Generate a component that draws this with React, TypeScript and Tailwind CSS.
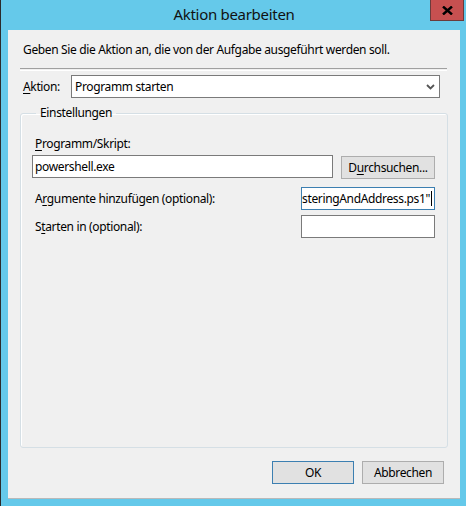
const font = { fontFamily: '"Noto Sans", "Liberation Sans", sans-serif' };

const Key = ({ children }: { children: string }) => (
  <span className="underline underline-offset-2">{children}</span>
);

const Button = ({
  children,
  primary,
  className = '',
}: {
  children: React.ReactNode;
  primary?: boolean;
  className?: string;
}) => (
  <div
    className={`flex h-[23px] items-center justify-center border bg-[#e1e1e1] text-[12px] text-black ${
      primary ? 'border-[#3c7fb1]' : 'border-[#adadad]'
    } ${className}`}
  >
    {children}
  </div>
);

export default function App() {
  return (
    <div
      className="flex h-[506px] w-[466px] flex-col border-l border-[#2b2b2b] bg-[#65c9ea] pb-[7px] pl-[7px] pr-[6px] tracking-[-0.35px]"
      style={font}
    >
      {/* title bar */}
      <div className="relative flex h-[30px] shrink-0 items-center justify-center">
        <span className="pb-[1px] text-[15px] tracking-[-0.3px] text-[#111]">Aktion bearbeiten</span>
        <div className="absolute right-[-4px] top-0 flex h-[21px] w-[34px] items-center justify-center border border-t-0 border-[#6b3b3b] bg-[#c75050]">
          <svg width="11" height="9" viewBox="0 0 11 9">
            <path d="M1 0.5 L10 8.5 M10 0.5 L1 8.5" stroke="#000" strokeWidth="2.4" />
          </svg>
        </div>
      </div>

      {/* content */}
      <div className="flex flex-1 flex-col border-b border-[#b9b9b9] bg-[#f0f0f0] px-[12px] text-[12px] text-black">
        <div className="mt-[12px] pl-[3px] leading-[16px]">
          Geben Sie die Aktion an, die von der Aufgabe ausgeführt werden soll.
        </div>
        <div className="mr-[1px] mt-[10px] h-[2px] border-t border-[#a0a0a0] shadow-[0_1px_0_#fff]" />

        <div className="mt-[5px] flex items-center pr-[8px]">
          <span className="w-[51px] pl-[3px]">
            <Key>A</Key>ktion:
          </span>
          <div className="flex h-[23px] flex-1 items-center justify-between border border-[#7a7a7a] bg-white pl-[3px] pr-[4px]">
            <span>Programm starten</span>
            <svg width="9" height="6" viewBox="0 0 9 6">
              <path d="M1 1 L4.5 4.5 L8 1" stroke="#555" strokeWidth="1.8" fill="none" />
            </svg>
          </div>
        </div>

        <fieldset className="mb-[1px] mt-[7px] flex h-[343px] flex-col rounded-[3px] border border-[#d5dfe5] pl-[11px] pr-[12px] shadow-[inset_1px_1px_0_#fff]">
          <legend className="ml-[4px] px-[4px] leading-[16px]">Einstellungen</legend>

          <div className="mt-[15px] pl-[3px] leading-[16px]">
            <Key>P</Key>rogramm/Skript:
          </div>
          <div className="mt-[3px] flex items-start justify-between">
            <div className="flex h-[23px] w-[301px] items-center border border-[#7a7a7a] bg-white pl-[2px]">
              powershell.exe
            </div>
            <Button className="mt-[1px] w-[94px]">
              D<Key>u</Key>rchsuchen...
            </Button>
          </div>

          <div className="mt-[8px] flex items-center justify-between">
            <span className="pl-[3px]">
              A<Key>r</Key>gumente hinzufügen (optional):
            </span>
            <div className="flex h-[23px] w-[134px] items-center justify-end overflow-hidden whitespace-nowrap border border-[#3c7fb1] bg-white pr-[2px]">
              <span className="shrink-0">ClusteringAndAddress.ps1"</span>
              <span className="ml-[1px] h-[15px] w-[1px] shrink-0 bg-black" />
            </div>
          </div>

          <div className="mt-[5px] flex items-center justify-between">
            <span className="pl-[3px]">
              S<Key>t</Key>arten in (optional):
            </span>
            <div className="h-[23px] w-[134px] border border-[#7a7a7a] bg-white" />
          </div>
        </fieldset>

        <div className="mt-[12px] flex justify-end gap-[8px] pr-[4px]">
          <Button primary className="w-[82px]">
            OK
          </Button>
          <Button className="w-[82px]">Abbrechen</Button>
        </div>
      </div>
    </div>
  );
}
